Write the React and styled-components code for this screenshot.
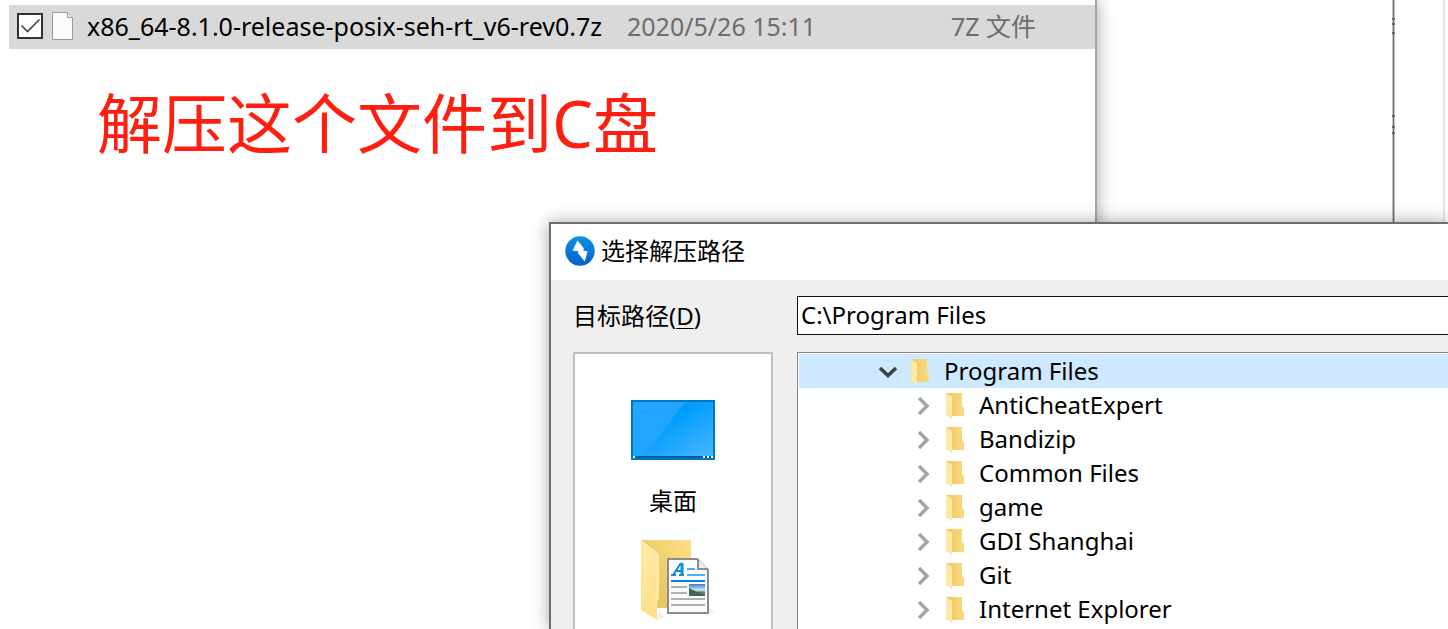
import React from 'react'
import styled, { createGlobalStyle } from 'styled-components'

const GlobalStyle = createGlobalStyle`
  * {
    box-sizing: border-box;
  }

  body {
    margin: 0;
    background: #fefefe;
    color: #000;
    font-family: 'Noto Sans', 'Noto Sans CJK SC', sans-serif;
    font-size: 24px;
    line-height: 34px;
  }

  button,
  input {
    font: inherit;
    color: inherit;
  }
`

const Desktop = styled.div`
  position: relative;
  display: flex;
  height: 100vh;
  overflow: hidden;
`

const Explorer = styled.section`
  flex: 1;
  z-index: 1;
  padding: 5px 0 0 9px;
  background: #fff;
  border-right: 2px solid #a6a6a6;
  box-shadow: 0 0 16px rgba(0, 0, 0, 0.35);
`

const FileRow = styled.div`
  display: flex;
  align-items: center;
  height: 44px;
  padding: 0 0 2px 8px;
  background: #d9d9d9;
  font-size: 25px;
  white-space: nowrap;
`

const CheckLabel = styled.label`
  display: grid;
  width: 26px;
  height: 26px;
  margin-right: 9px;

  > * {
    grid-area: 1 / 1;
  }

  svg {
    z-index: 1;
    pointer-events: none;
  }
`

const CheckBox = styled.input`
  appearance: none;
  width: 26px;
  height: 26px;
  margin: 0;
  background: #fff;
  border: 2px solid #333;
`

const FileName = styled.span`
  width: 540px;
  margin-left: 14px;
`

const FileInfo = styled.span`
  width: ${props => props.width}px;
  color: #6d6d6d;
`

const Note = styled.p`
  margin: 26px 0 0 88px;
  color: #ff1e10;
  font-size: 65px;
  line-height: 96px;
`

const BackWindow = styled.div`
  position: relative;
  width: 297px;
  border-right: 1px solid #6d6d6d;
  box-shadow: inset -1px 0 #c4c4c4;
`

const Mark = styled.i`
  position: absolute;
  right: -2px;
  top: ${props => props.top}px;
  width: 3px;
  height: 2px;
  background: #666;
`

const SideStrip = styled.div`
  width: 51px;
  border: solid;
  border-color: #c4c4c4 #e5e5e5 #c4c4c4 #c4c4c4;
  border-width: 0 2px 0 1px;
`

const Edge = styled.div`
  width: 3px;
`

const Dialog = styled.section`
  position: absolute;
  z-index: 2;
  top: 222px;
  right: 0;
  bottom: 0;
  left: 549px;
  display: flex;
  flex-direction: column;
  background: #efefef;
  border: solid #6d6d6d;
  border-width: 2px 0 0 2px;
  box-shadow: 0 0 16px rgba(0, 0, 0, 0.35);
`

const TitleBar = styled.header`
  display: flex;
  flex: none;
  align-items: center;
  gap: 6px;
  height: 56px;
  padding: 0 0 2px 14px;
  background: #fff;
`

const Title = styled.h1`
  margin: 0;
  font-size: 24px;
  font-weight: 400;
`

const DialogBody = styled.div`
  display: grid;
  flex: 1;
  grid-template-columns: 200px 1fr;
  grid-template-rows: 39px 1fr;
  gap: 17px 24px;
  min-height: 0;
  padding: 16px 0 0 22px;
`

const PathLabel = styled.label`
  align-self: center;

  u {
    text-decoration-thickness: 1px;
    text-underline-offset: 3px;
  }
`

const PathInput = styled.input`
  width: 100%;
  min-width: 0;
  padding: 0 3px 2px;
  background: #fff;
  border: solid #111;
  border-width: 1px 0 1px 1px;
  border-radius: 0;
  outline: 0;
`

const Places = styled.nav`
  display: flex;
  flex-direction: column;
  gap: 14px;
  padding-top: 28px;
  overflow: hidden;
  background: #fff;
  border: 2px solid #bfbfbf;
  border-bottom: 0;
`

const Place = styled.button`
  display: flex;
  flex: none;
  flex-direction: column;
  align-items: center;
  gap: 6px;
  padding: 0;
  background: none;
  border: 0;
`

const Tree = styled.ul`
  margin: 0;
  padding: 1px 0 0 1px;
  overflow: hidden;
  list-style: none;
  background: #fff;
  border: solid #828790;
  border-width: 1px 0 0 1px;
`

const TreeRow = styled.button`
  display: flex;
  align-items: center;
  width: 100%;
  height: 34px;
  padding: 0 0 0 ${props => (props.$root ? 79 : 114)}px;
  background: ${props => (props.$root ? '#cde8ff' : 'transparent')};
  border: 0;
  text-align: left;
`

const TreeIcons = styled.span`
  display: flex;
  align-items: center;
  gap: 12px;
  padding-top: 1px;
`

const TreeName = styled.span`
  margin-left: 14px;
`

const folders = ['AntiCheatExpert', 'Bandizip', 'Common Files', 'game', 'GDI Shanghai', 'Git', 'Internet Explorer']

const CheckIcon = () => (
  <svg width="26" height="26" fill="none" stroke="#444" strokeWidth="1.6">
    <path d="M4.5 12.5l6 6L22.5 6.5" />
  </svg>
)

const FileIcon = () => (
  <svg width="21" height="28">
    <path d="M.5.5h15l5 5v22H.5z" fill="#fafbfb" stroke="#999" />
    <path d="M15.5.5v5h5" fill="#eee" stroke="#999" />
  </svg>
)

const BoltIcon = () => (
  <svg width="30" height="30" viewBox="0 0 30 30">
    <defs>
      <linearGradient id="bolt" x1="0" y1="0" x2="0" y2="1">
        <stop offset="0" stopColor="#0a94e0" />
        <stop offset="1" stopColor="#0a5ecb" />
      </linearGradient>
    </defs>
    <circle cx="15" cy="15" r="14.7" fill="url(#bolt)" />
    <path d="M12.5 4.5l6.5 8-1 2 4.500.8-2.700 10.200-7-8.500.8-1.800L7.500 14.700z" fill="#fff" />
  </svg>
)

const FolderIcon = () => (
  <svg width="20" height="28" viewBox="0 0 20 28">
    <defs>
      <linearGradient id="folder" x1="0" y1="0" x2="1" y2="0">
        <stop offset="0" stopColor="#ecc764" />
        <stop offset="1" stopColor="#fbdb7e" />
      </linearGradient>
    </defs>
    <path d="M1 1h16v13l2 2v8H1z" fill="url(#folder)" />
    <path d="M1 1l6 4v22l-6-4z" fill="#ffe8a3" />
  </svg>
)

const Chevron = ({ open }) => (
  <svg width="20" height="20" fill="none" strokeWidth="3.5" stroke={open ? '#404040' : '#a6a6a6'}>
    <path d={open ? 'M2 6l8 7.5L18 6' : 'M6 2l8 8-8 8'} />
  </svg>
)

const DesktopIcon = () => (
  <svg width="96" height="96" shapeRendering="crispEdges">
    <defs>
      <linearGradient id="screen" x1="0.4" y1="0.4" x2="1" y2="1">
        <stop offset="0" stopColor="#009dff" />
        <stop offset="1" stopColor="#49b6ff" />
      </linearGradient>
    </defs>
    <path d="M6 18h84v60H6z" fill="#0077c2" />
    <path d="M8 20h80v54H8z" fill="url(#screen)" />
    <path d="M8 20h52L19 74H8z" fill="#21a5ff" />
    <path d="M8 74h80v2H8z" fill="#06609e" />
    <path d="M8 74h2v2H8zM78 74h2v2h-2zM82 74h2v2h-2zM86 74h2v2h-2z" fill="#fff" />
  </svg>
)

const DocumentsIcon = () => (
  <svg width="96" height="96">
    <defs>
      <linearGradient id="back" x1="0" y1="1" x2="1" y2="0">
        <stop offset="0.3" stopColor="#e9c563" />
        <stop offset="1" stopColor="#ffe188" />
      </linearGradient>
      <linearGradient id="flap" x1="0" y1="0" x2="0" y2="1">
        <stop offset="0" stopColor="#ffe9a8" />
        <stop offset="1" stopColor="#ffe08a" />
      </linearGradient>
      <linearGradient id="photo" x1="0" y1="0" x2="0" y2="1">
        <stop offset="0" stopColor="#4277c8" />
        <stop offset="0.5" stopColor="#cfe6f5" />
        <stop offset="0.7" stopColor="#4d7a6c" />
        <stop offset="1" stopColor="#7fa6c8" />
      </linearGradient>
    </defs>
    <path d="M32 88l7-3-5-6zM84 82l7-2-7-4z" fill="#eee" />
    <path d="M16 8h50v68H16z" fill="url(#back)" />
    <path d="M16 8l18 14v45l-2 3v18L16 78z" fill="url(#flap)" />
    <path d="M17 9l16 14v44" fill="none" stroke="#fff0c0" />
    <path d="M43 27h29l11 11v43H43z" fill="#f8fafb" stroke="#8c8c8c" strokeWidth="2" />
    <path d="M73 27v10h10" fill="#eee" stroke="#8c8c8c" strokeWidth="2" />
    <path d="M48 43l8-12M51 39h6M46 43h5M54 43h5" fill="none" stroke="#128ddb" strokeWidth="2" />
    <path d="M57 31v12" stroke="#128ddb" strokeWidth="3" />
    <path d="M62 37h8M62 43h18" stroke="#45b3ea" strokeWidth="2" />
    <path d="M46 49h34" stroke="#0a84d0" strokeWidth="2" />
    <path d="M46 55h16M46 61h16M46 67h34M46 73h34" stroke="#b0b0b0" strokeWidth="2" />
    <path d="M64 52h16v12H64z" fill="url(#photo)" />
    <path d="M64 56l6 3 10 4v1H64z" fill="#3c6659" />
  </svg>
)

const TreeItem = ({ name, root }) => (
  <li>
    <TreeRow type="button" $root={root}>
      <TreeIcons>
        <Chevron open={root} />
        <FolderIcon />
      </TreeIcons>
      <TreeName>{name}</TreeName>
    </TreeRow>
  </li>
)

const App = () => (
  <Desktop>
    <GlobalStyle />
    <Explorer>
      <FileRow>
        <CheckLabel>
          <CheckBox type="checkbox" id="file" aria-labelledby="file-name" defaultChecked />
          <CheckIcon />
        </CheckLabel>
        <FileIcon />
        <FileName id="file-name">x86_64-8.1.0-release-posix-seh-rt_v6-rev0.7z</FileName>
        <FileInfo width={324}>2020/5/26 15:11</FileInfo>
        <FileInfo width={100}>7Z 文件</FileInfo>
      </FileRow>
      <Note>解压这个文件到C盘</Note>
    </Explorer>
    <BackWindow>
      {[18, 23, 32, 115, 126, 132].map(top => (
        <Mark key={top} top={top} />
      ))}
    </BackWindow>
    <SideStrip />
    <Edge />
    <Dialog>
      <TitleBar>
        <BoltIcon />
        <Title>选择解压路径</Title>
      </TitleBar>
      <DialogBody>
        <PathLabel htmlFor="path">
          目标路径(<u>D</u>)
        </PathLabel>
        <PathInput id="path" type="text" defaultValue="C:\Program Files" />
        <Places>
          <Place type="button">
            <DesktopIcon />
            桌面
          </Place>
          <Place type="button" aria-label="文档">
            <DocumentsIcon />
          </Place>
        </Places>
        <Tree>
          <TreeItem name="Program Files" root />
          {folders.map(name => (
            <TreeItem key={name} name={name} />
          ))}
        </Tree>
      </DialogBody>
    </Dialog>
  </Desktop>
)

export default App
